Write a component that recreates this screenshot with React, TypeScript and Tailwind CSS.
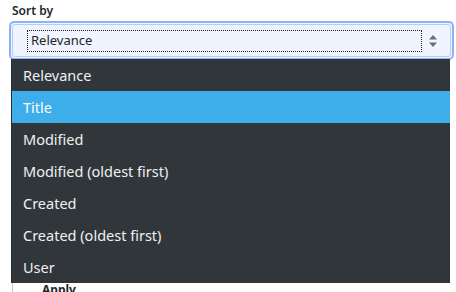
import React from "react";

const items = [
  "Relevance",
  "Title",
  "Modified",
  "Modified (oldest first)",
  "Created",
  "Created (oldest first)",
  "User",
];

export default function App() {
  return (
    <div
      className="relative w-[456px] h-[292px] overflow-hidden bg-white text-[#232629]"
      style={{ fontFamily: '"Noto Sans", "Open Sans", sans-serif' }}
    >
      <div className="pl-[12px] pt-[3px] text-[12px] leading-[16px] font-semibold">Sort by</div>
      <div className="mt-[2px] ml-[9px] mr-[2px] h-[39px] rounded-[5px] border-2 border-[#8cb1f5] bg-[#eff4fe] p-[1px]">
        <div className="flex h-full items-center rounded-[3px] border border-[#b8cdf5] pl-[14px] pr-[12px]">
          <div className="flex h-[22px] flex-1 items-center border border-dotted border-[#222] pl-[3px] text-[13px]">
            Relevance
          </div>
          <svg width="10" height="14" viewBox="0 0 10 14" className="ml-[6px]">
            <path d="M5 1 L9 5.5 H1 Z" fill="#6b6b7b" />
            <path d="M5 13 L9 8.5 H1 Z" fill="#6b6b7b" />
          </svg>
        </div>
      </div>
      <div className="mt-[220px] ml-[12px] border-l border-[#c4c6c8] h-[20px] pl-[29px] text-[12px] font-bold leading-[16px] pt-[2px]">
        Apply
      </div>
      <div className="absolute left-[11px] top-[59px] w-[439px] bg-[#31363b] border-l border-[#2a2e32]">
        {items.map((it, i) => (
          <div
            key={it}
            className={
              "h-[32px] flex items-center pl-[11px] pt-[2px] text-[14.5px] " +
              (i === 1 ? "bg-[#3daee9] text-[#fcfcfc]" : "text-[#eff0f1]")
            }
          >
            {it}
          </div>
        ))}
      </div>
    </div>
  );
}
